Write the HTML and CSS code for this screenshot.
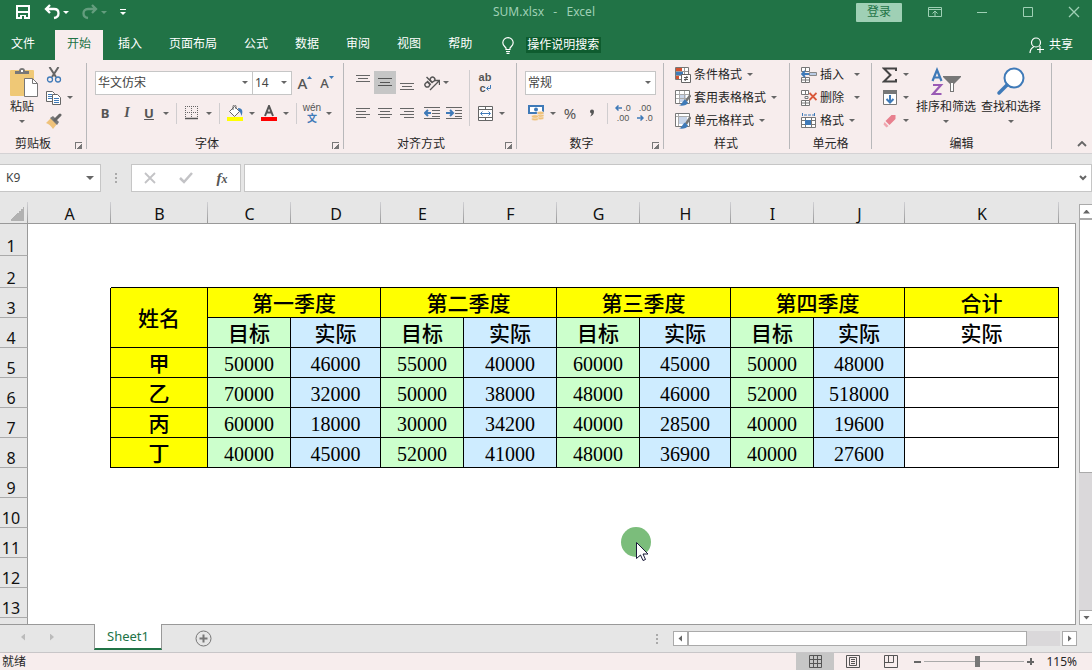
FILE: index.html
```html
<!DOCTYPE html>
<html lang="zh-CN">
<head>
    <meta charset="utf-8">
    <title>SUM.xlsx - Excel</title>
    <link rel="stylesheet" href="styles.css">
</head>
<body>
    <header class="titlebar">
        <div class="quick">
            <button class="q-save" aria-label="保存"><svg width="16" height="16" viewBox="0 0 16 16"><path d="M2 2h12v12H2z M2 8h12" fill="none" stroke="#fff" stroke-width="2"/><path d="M5 11h6v4H5z" fill="#fff"/><path d="M7 12h2v3H7z" fill="#217346"/></svg></button>
            <button aria-label="撤消"><svg width="16" height="16" viewBox="0 0 16 16"><path d="M6 1L2 5l4 4M2.500 5H10c6 0 6 8 0 9" fill="none" stroke="#fff" stroke-width="2.300"/></svg><i class="caret light"></i></button>
            <button class="dim" aria-label="恢复"><svg width="16" height="16" viewBox="0 0 16 16"><path d="M10 1l4 4-4 4M13.500 5H6c-6 0-6 8 0 9" fill="none" stroke="#fff" stroke-width="2.300"/></svg><i class="caret light"></i></button>
            <button aria-label="自定义快速访问工具栏"><svg width="6" height="8" viewBox="0 0 6 8"><path d="M0 1.500h6" stroke="#fff"/><path d="M0 4h6L3 7z" fill="#fff"/></svg></button>
        </div>
        <div class="doc-title">SUM.xlsx&nbsp;&nbsp; -&nbsp;&nbsp; Excel</div>
        <div class="window-buttons">
            <button class="login">登录</button>
            <button aria-label="功能区显示选项"><svg width="14" height="12" viewBox="0 0 14 12"><path d="M.5 1.500h13v9H.5zM.5 3.500h13M7 10V5M4.500 7.500L7 5l2.500 2.500" fill="none" stroke="#9fd0b5"/></svg></button>
            <button aria-label="最小化"><svg width="12" height="12" viewBox="0 0 12 12"><path d="M1 6.500h10" stroke="#9fd0b5"/></svg></button>
            <button aria-label="最大化"><svg width="12" height="12" viewBox="0 0 12 12"><path d="M1.500 1.500h9v9h-9z" fill="none" stroke="#9fd0b5"/></svg></button>
            <button aria-label="关闭"><svg width="12" height="12" viewBox="0 0 12 12"><path d="M1 1l10 10M11 1L1 11" stroke="#9fd0b5" stroke-width="1.300"/></svg></button>
        </div>
    </header>

    <nav class="tabs">
        <a href="#" class="file">文件</a>
        <a href="#" class="active">开始</a>
        <a href="#">插入</a>
        <a href="#">页面布局</a>
        <a href="#">公式</a>
        <a href="#">数据</a>
        <a href="#">审阅</a>
        <a href="#">视图</a>
        <a href="#">帮助</a>
        <a href="#" class="tell-me"><svg width="12" height="17" viewBox="0 0 12 17"><path d="M4 12.500V11C3 9.500 .8 8.500 .8 5.800a5.200 5.200 0 0 1 10.400 0C11.200 8.500 9 9.500 8 11v1.500zM4 14.500h4M4.500 16.300h3" fill="none" stroke="#fff" stroke-width="1.200"/></svg><span>操作说明搜索</span></a>
        <a href="#" class="share"><svg width="16" height="17" viewBox="0 0 16 17"><circle cx="7" cy="5.500" r="4.500" fill="none" stroke="#fff" stroke-width="1.200"/><path d="M1 16c0-3 1.500-5 4-6.500M11 9v7M8 12.500h7" fill="none" stroke="#fff" stroke-width="1.200"/></svg>共享</a>
    </nav>

    <div class="ribbon">
        <section class="group clipboard">
            <div class="group-body split">
                <button class="big"><svg width="30" height="31" viewBox="0 0 30 31"><rect x="1" y="3" width="24" height="26" rx="1" fill="#efc876"/><path d="M6 7V4h4a3 3 0 0 1 6 0h4v3z" fill="#777"/><rect x="12" y="3" width="2" height="2" fill="#fff"/><path d="M15.500 11.500h8l5 5v13h-13z" fill="#fff" stroke="#777"/><path d="M23.500 11.500v5h5" fill="none" stroke="#777"/></svg><span>粘贴</span><i class="caret"></i></button>
                <div class="stack">
                    <button aria-label="剪切"><svg width="16" height="16" viewBox="0 0 16 16"><path d="M3.500 0l6.500 10M12.500 0L6 10" stroke="#666" stroke-width="2"/><circle cx="4" cy="12.500" r="2.500" fill="none" stroke="#3f7ab8" stroke-width="1.300"/><circle cx="12" cy="12.500" r="2.500" fill="none" stroke="#3f7ab8" stroke-width="1.300"/></svg></button>
                    <button aria-label="复制"><svg width="16" height="16" viewBox="0 0 16 16"><path d="M.5 1.500h6l2 2v8h-8z" fill="#fff" stroke="#666"/><path d="M2 4.500h4M2 6.500h4M2 8.500h4" stroke="#3f7ab8"/><path d="M6.500 4.500h5l3 3v7h-8z" fill="#fff" stroke="#666"/><path d="M8 8.500h5M8 10.500h5M8 12.500h5" stroke="#3f7ab8"/></svg><i class="caret"></i></button>
                    <button aria-label="格式刷"><svg width="16" height="16" viewBox="0 0 16 16"><path d="M5 5l6 6-4 5c-2-3-4-5-7-6z" fill="#efc27a"/><path d="M4 5l3-2 6 6-2 3z" fill="#777"/><path d="M9 7l5-5" stroke="#666" stroke-width="3" stroke-linecap="round"/></svg></button>
                </div>
            </div>
            <div class="group-name">剪贴板</div><button class="launcher" aria-label="剪贴板设置"></button>
        </section>

        <section class="group font">
            <div class="group-body">
                <div class="row">
                    <select class="font-name" aria-label="字体"><option>华文仿宋</option></select>
                    <select class="font-size" aria-label="字号"><option>14</option></select>
                    <button class="tool grow" aria-label="增大字号">A<svg width="5" height="3" viewBox="0 0 5 3"><path d="M0 3l2.500-3L5 3z" fill="#3f7ab8"/></svg></button>
                    <button class="tool shrink" aria-label="减小字号">A<svg width="5" height="3" viewBox="0 0 5 3"><path d="M0 0l2.500 3L5 0z" fill="#3f7ab8"/></svg></button>
                </div>
                <div class="row second">
                    <button class="tool bold">B</button>
                    <button class="tool italic">I</button>
                    <button class="tool underline">U</button>
                    <button class="drop" aria-label="下划线样式"><i class="caret"></i></button>
                    <i class="sep"></i>
                    <button class="tool" aria-label="边框"><svg width="14" height="14" viewBox="0 0 14 14"><path d="M0 .5h14M0 6.500h14M.5 0v13M6.500 0v13M12.500 0v13" stroke="#666" stroke-dasharray="1 1"/><path d="M0 12.500h13" stroke="#555" stroke-width="1.500"/></svg></button>
                    <button class="drop" aria-label="边框样式"><i class="caret"></i></button>
                    <i class="sep"></i>
                    <button class="tool" aria-label="填充颜色"><svg width="16" height="16" viewBox="0 0 16 16"><path d="M7.500 1.500l5 5-5 5-5-5z" fill="#fff" stroke="#666"/><path d="M6 5V1.500a1.500 1.500 0 0 1 3 0V4" fill="none" stroke="#666"/><path d="M11 3c5 0 5 4 3.500 8-1-3-1-4-3-5z" fill="#3f7ab8"/><path d="M0 12h16v4H0z" fill="#ff0"/></svg></button>
                    <button class="drop" aria-label="选择填充颜色"><i class="caret"></i></button>
                    <button class="tool" aria-label="字体颜色"><svg width="16" height="16" viewBox="0 0 16 16"><path d="M4 11L8 1l4 10M5.500 7.500h5" fill="none" stroke="#555" stroke-width="2"/><path d="M0 12h16v4H0z" fill="red"/></svg></button>
                    <button class="drop" aria-label="选择字体颜色"><i class="caret"></i></button>
                    <i class="sep"></i>
                    <button class="tool pinyin"><span>wén</span><b>文</b></button>
                    <button class="drop" aria-label="拼音选项"><i class="caret"></i></button>
                </div>
            </div>
            <div class="group-name">字体</div><button class="launcher" aria-label="字体设置"></button>
        </section>

        <section class="group align">
            <div class="group-body split">
                <div>
                    <div class="row">
                        <button class="tool" aria-label="顶端对齐"><svg width="14" height="16" viewBox="0 0 14 16"><path d="M0 .5h14M2 3.500h10M0 6.500h14" stroke="#666"/></svg></button>
                        <button class="tool pressed" aria-label="垂直居中"><svg width="14" height="13" viewBox="0 0 14 13"><path d="M0 2.500h14M2 6.500h10M0 9.500h14" stroke="#555"/></svg></button>
                        <button class="tool" aria-label="底端对齐"><svg width="14" height="16" viewBox="0 0 14 16"><path d="M0 8.500h14M2 11.500h10M0 14.500h14" stroke="#666"/></svg></button>
                        <button class="tool gap" aria-label="方向"><svg width="16" height="16" viewBox="0 0 16 16"><g fill="none" stroke="#555" stroke-width="1.400" transform="rotate(-45 5 8)"><circle cx="2.500" cy="8" r="2.300"/><path d="M5 5.300v5.200M7.500 2v8.500"/><circle cx="10" cy="8" r="2.300"/></g><path d="M6 15l9-9M11 5.500h4.500V10" fill="none" stroke="#555" stroke-width="1.300"/></svg></button>
                        <button class="drop tight" aria-label="方向选项"><i class="caret"></i></button>
                    </div>
                    <div class="row second">
                        <button class="tool" aria-label="左对齐"><svg width="14" height="12" viewBox="0 0 14 12"><path d="M0 1.500h14M0 4.500h10M0 7.500h14M0 10.500h10" stroke="#666"/></svg></button>
                        <button class="tool" aria-label="居中"><svg width="14" height="12" viewBox="0 0 14 12"><path d="M0 1.500h14M2 4.500h10M0 7.500h14M2 10.500h10" stroke="#666"/></svg></button>
                        <button class="tool" aria-label="右对齐"><svg width="14" height="12" viewBox="0 0 14 12"><path d="M0 1.500h14M4 4.500h10M0 7.500h14M4 10.500h10" stroke="#666"/></svg></button>
                        <button class="tool gap" aria-label="减少缩进量"><svg width="16" height="14" viewBox="0 0 16 14"><path d="M0 1.500h16M8 4.500h8M8 7.500h8M8 10.500h8M0 12.500h16" stroke="#666"/><path d="M7 7H2M4 4L1 7l3 3" fill="none" stroke="#3f7ab8" stroke-width="2"/></svg></button>
                        <button class="tool" aria-label="增加缩进量"><svg width="16" height="14" viewBox="0 0 16 14"><path d="M0 1.500h16M9 4.500h7M9 7.500h7M9 10.500h7M0 12.500h16" stroke="#666"/><path d="M0 7h6M4 4l3 3-3 3" fill="none" stroke="#3f7ab8" stroke-width="2"/></svg></button>
                    </div>
                </div>
                <i class="sep tall"></i>
                <div>
                    <div class="row">
                        <button class="tool wrap"><span>ab</span><span>c<svg width="5" height="6" viewBox="0 0 5 6"><path d="M4.500 0v3.500H1M2.500 1.500l-2 2 2 2" fill="none" stroke="#3f7ab8"/></svg></span></button>
                    </div>
                    <div class="row second">
                        <button class="tool" aria-label="合并后居中"><svg width="15" height="15" viewBox="0 0 15 15"><path d="M.5.5h14v14H.5z" fill="#fff" stroke="#666"/><path d="M.5 3.500h14M.5 11.500h14M7.500 0v3M7.500 12v3" stroke="#666"/><path d="M3 7.500h9M4.500 5.500l-2 2 2 2M10.500 5.500l2 2-2 2" fill="none" stroke="#3f7ab8"/></svg></button>
                        <button class="drop" aria-label="合并选项"><i class="caret"></i></button>
                    </div>
                </div>
            </div>
            <div class="group-name">对齐方式</div><button class="launcher" aria-label="对齐设置"></button>
        </section>

        <section class="group number">
            <div class="group-body">
                <div class="row">
                    <select class="number-format" aria-label="数字格式"><option>常规</option></select>
                </div>
                <div class="row second">
                    <button class="tool" aria-label="会计数字格式"><svg width="17" height="16" viewBox="0 0 17 16"><path d="M1 1h14v7H1z" fill="#fff" stroke="#3f7ab8" stroke-width="2"/><circle cx="8" cy="4.500" r="2" fill="#3f7ab8"/><g fill="#efc27a" stroke="#f7eded" stroke-width=".6"><ellipse cx="12.500" cy="13" rx="3.500" ry="1.800"/><ellipse cx="12.500" cy="10.500" rx="3.500" ry="1.800"/><ellipse cx="12.500" cy="8" rx="3.500" ry="1.800"/><ellipse cx="7" cy="14" rx="3.500" ry="1.800"/><ellipse cx="7" cy="11.500" rx="3.500" ry="1.800"/></g></svg></button>
                    <button class="drop" aria-label="会计格式选项"><i class="caret"></i></button>
                    <button class="tool percent">%</button>
                    <button class="tool comma" aria-label="千位分隔样式"><svg width="6" height="8" viewBox="0 0 6 8"><path d="M1 2.500a2 2 0 1 1 4 0C5 5 3.500 7 1 7.500 2 6.500 2.500 5.500 2.500 4.500A2 2 0 0 1 1 2.500z" fill="#555"/></svg></button>
                    <i class="sep"></i>
                    <button class="tool decimals"><span><svg width="7" height="6" viewBox="0 0 7 6"><path d="M1 3h6M3.500.5L1 3l2.500 2.500" fill="none" stroke="#3f7ab8" stroke-width="1.500"/></svg>.0</span><span>.00</span></button>
                    <button class="tool decimals"><span>.00</span><span><svg width="7" height="6" viewBox="0 0 7 6"><path d="M0 3h6M3.500.5L6 3 3.500 5.500" fill="none" stroke="#3f7ab8" stroke-width="1.500"/></svg>.0</span></button>
                </div>
            </div>
            <div class="group-name">数字</div><button class="launcher" aria-label="数字设置"></button>
        </section>

        <section class="group style">
            <div class="group-body stack">
                <button><svg width="16" height="16" viewBox="0 0 16 16"><path d="M.5.5h13v12H.5z" fill="#fff" stroke="#777"/><path d="M1 4.500h12M1 8.500h12M9.500 1v7" stroke="#999"/><path d="M1 1h6v3H1zM1 9h3v3H1z" fill="#d35230"/><path d="M1 5h7v3H1z" fill="#3f7ab8"/><path d="M6.500 7.500h9v8h-9z" fill="#fff" stroke="#666"/><path d="M9 10.500h4M9 12.500h4M12 9l-2 5" stroke="#555"/></svg>条件格式<i class="caret"></i></button>
                <button><svg width="16" height="16" viewBox="0 0 16 16"><path d="M.5.500h14v13H.5z" fill="#fff" stroke="#777"/><path d="M4 4h7v8H4z" fill="#c8d5e9"/><path d="M1 4.500h13M1 8.500h13M4.500 1v12M9.500 1v12" stroke="#aaa"/><path d="M15.500 5l-4.500 6" stroke="#777" stroke-width="2.500"/><path d="M10 9.500l3 3c-1 3-5 3.500-9 3 3-1 3-4 6-6z" fill="#3f7ab8"/></svg>套用表格格式<i class="caret"></i></button>
                <button><svg width="16" height="16" viewBox="0 0 16 16"><path d="M.5.500h14v13H.5z" fill="#fff" stroke="#777"/><path d="M4 4h8v7H4z" fill="#c8d5e9"/><path d="M1 3.500h13M3.500 1v12" stroke="#aaa"/><path d="M15.500 4l-4.500 7" stroke="#777" stroke-width="2.500"/><path d="M10 9.500l3 3c-1 3-5 3.500-9 3 3-1 3-4 6-6z" fill="#3f7ab8"/></svg>单元格样式<i class="caret"></i></button>
            </div>
            <div class="group-name">样式</div>
        </section>

        <section class="group cells">
            <div class="group-body stack">
                <button class="wide"><svg width="16" height="16" viewBox="0 0 16 16"><path d="M.5.5h8v4h-8zM4.500.5v4M.5 10.500h8v5h-8zM4.500 10.500v5M.5 13h8" fill="#fff" stroke="#777"/><path d="M8.500 5.500h7v3h-7z" fill="#b9cbe4" stroke="#888"/><path d="M8 7H2M4 4L1 7l3 3" fill="none" stroke="#3f7ab8" stroke-width="1.800"/></svg>插入<i class="caret"></i></button>
                <button class="wide"><svg width="16" height="16" viewBox="0 0 16 16"><path d="M.5.5h7v4h-7zM4.500.5v4M.5 10.500h8v5h-8zM4.500 10.500v5M.5 13h8M4 6.500h3v2H4z" fill="#fff" stroke="#777"/><path d="M8.500 3l7 7M15.500 3l-7 7" stroke="#d9593b" stroke-width="1.800"/></svg>删除<i class="caret"></i></button>
                <button><svg width="16" height="16" viewBox="0 0 16 16"><path d="M.5 4.500h14v10H.5zM.5 7.500h14M.5 11.500h14M4.500 4.500v10M10.500 4.500v10" fill="#fff" stroke="#777"/><path d="M4 7h6v5H4z" fill="#3f7ab8"/><path d="M1.500 0v4M13.500 0v4M3 2h10" stroke="#3f7ab8" stroke-dasharray="3 1"/></svg>格式<i class="caret"></i></button>
            </div>
            <div class="group-name">单元格</div>
        </section>

        <section class="group edit">
            <div class="group-body split">
                <div class="stack">
                    <button aria-label="自动求和"><svg width="16" height="16" viewBox="0 0 16 16"><path d="M14 4V1.500H2L8.500 8 2 14.500h12V12" fill="none" stroke="#444" stroke-width="2"/></svg><i class="caret"></i></button>
                    <button aria-label="填充"><svg width="16" height="16" viewBox="0 0 16 16"><path d="M1.500 1.500h13v13h-13z" fill="#fff" stroke="#777"/><path d="M1 0h14v4H1z" fill="#777"/><path d="M8 5v7M4.500 9L8 12.500 11.500 9" fill="none" stroke="#3f7ab8" stroke-width="2"/></svg><i class="caret"></i></button>
                    <button aria-label="清除"><svg width="16" height="16" viewBox="0 0 16 16"><path d="M9.500 2h4v4l-6 6-4-4z" fill="#e8808e"/><path d="M2.500 9l4 4-2 1.500-3-3z" fill="#f0a5ae"/></svg><i class="caret"></i></button>
                </div>
                <button class="big"><svg width="30" height="31" viewBox="0 0 30 31"><path d="M1.500 14L6 3l4.500 11M3 10.500h6" fill="none" stroke="#3f7ab8" stroke-width="2.200"/><path d="M2 18h8L2 27h8.500" fill="none" stroke="#9a5bb5" stroke-width="2.200"/><path d="M12 9h18v1l-7 7v8h-4v-8l-7-7z" fill="#777"/><path d="M20 16h2v8h-2z" fill="#fff"/></svg><span>排序和筛选</span><i class="caret"></i></button>
                <button class="big"><svg width="30" height="31" viewBox="0 0 30 31"><circle cx="18" cy="11" r="9.500" fill="#fff" stroke="#3f7ab8" stroke-width="2"/><path d="M11 18L3 26" stroke="#3f7ab8" stroke-width="3.500" stroke-linecap="round"/></svg><span>查找和选择</span><i class="caret"></i></button>
            </div>
            <div class="group-name">编辑</div>
        </section>
        <button class="collapse" aria-label="折叠功能区"><svg width="10" height="6" viewBox="0 0 10 6"><path d="M1 5l4-4 4 4" fill="none" stroke="#666" stroke-width="1.800"/></svg></button>
    </div>

    <div class="formula-bar">
        <select class="name-box" aria-label="名称框"><option>K9</option></select>
        <i class="dots"></i>
        <div class="formula-tools">
            <button aria-label="取消"><svg width="12" height="12" viewBox="0 0 12 12"><path d="M1 1l10 10M11 1L1 11" stroke="#c3c3c6" stroke-width="1.800"/></svg></button>
            <button aria-label="输入"><svg width="14" height="12" viewBox="0 0 14 12"><path d="M1 6l4 4 8-9" fill="none" stroke="#c3c3c6" stroke-width="2.500"/></svg></button>
            <button class="fx">f<span>x</span></button>
        </div>
        <div class="formula-field">
            <input type="text" aria-label="编辑栏">
            <button aria-label="展开编辑栏"><svg width="8" height="6" viewBox="0 0 8 6"><path d="M1 1l3 3 3-3" fill="none" stroke="#666" stroke-width="2"/></svg></button>
        </div>
    </div>

    <main class="workspace">
        <div class="sheet">
            <table>
                <colgroup>
                    <col class="c-head"><col class="c-s"><col class="c-b"><col class="c-s"><col class="c-d"><col class="c-s"><col class="c-f"><col class="c-s"><col class="c-h"><col class="c-s"><col class="c-h"><col class="c-k"><col>
                </colgroup>
                <thead>
                    <tr><th class="corner"></th><th>A</th><th>B</th><th>C</th><th>D</th><th>E</th><th>F</th><th>G</th><th>H</th><th>I</th><th>J</th><th>K</th><th class="rest"></th></tr>
                </thead>
                <tbody>
                    <tr class="tall"><th>1</th><td colspan="12" class="end"></td></tr>
                    <tr class="tall"><th>2</th><td></td><td colspan="10" class="above"></td><td class="end"></td></tr>
                    <tr><th>3</th><td class="before"></td><td class="cell title" rowspan="2">姓名</td><td class="cell title" colspan="2">第一季度</td><td class="cell title" colspan="2">第二季度</td><td class="cell title" colspan="2">第三季度</td><td class="cell title" colspan="2">第四季度</td><td class="cell title">合计</td><td class="end"></td></tr>
                    <tr><th>4</th><td class="before"></td><td class="cell goal sub">目标</td><td class="cell real sub">实际</td><td class="cell goal sub">目标</td><td class="cell real sub">实际</td><td class="cell goal sub">目标</td><td class="cell real sub">实际</td><td class="cell goal sub">目标</td><td class="cell real sub">实际</td><td class="cell sub">实际</td><td class="end"></td></tr>
                    <tr><th>5</th><td class="before"></td><td class="cell title">甲</td><td class="cell goal">50000</td><td class="cell real">46000</td><td class="cell goal">55000</td><td class="cell real">40000</td><td class="cell goal">60000</td><td class="cell real">45000</td><td class="cell goal">50000</td><td class="cell real">48000</td><td class="cell"></td><td class="end"></td></tr>
                    <tr><th>6</th><td class="before"></td><td class="cell title">乙</td><td class="cell goal">70000</td><td class="cell real">32000</td><td class="cell goal">50000</td><td class="cell real">38000</td><td class="cell goal">48000</td><td class="cell real">46000</td><td class="cell goal">52000</td><td class="cell real">518000</td><td class="cell"></td><td class="end"></td></tr>
                    <tr><th>7</th><td class="before"></td><td class="cell title">丙</td><td class="cell goal">60000</td><td class="cell real">18000</td><td class="cell goal">30000</td><td class="cell real">34200</td><td class="cell goal">40000</td><td class="cell real">28500</td><td class="cell goal">40000</td><td class="cell real">19600</td><td class="cell"></td><td class="end"></td></tr>
                    <tr><th>8</th><td class="before"></td><td class="cell title">丁</td><td class="cell goal">40000</td><td class="cell real">45000</td><td class="cell goal">52000</td><td class="cell real">41000</td><td class="cell goal">48000</td><td class="cell real">36900</td><td class="cell goal">40000</td><td class="cell real">27600</td><td class="cell"></td><td class="end"></td></tr>
                    <tr><th>9</th><td colspan="12" class="end"></td></tr>
                    <tr><th>10</th><td colspan="12" class="end"></td></tr>
                    <tr><th>11</th><td colspan="12" class="end"></td></tr>
                    <tr><th>12</th><td colspan="12" class="end"></td></tr>
                    <tr><th>13</th><td colspan="12" class="end"></td></tr>
                    <tr><th></th><td colspan="12" class="end"></td></tr>
                </tbody>
            </table>
            <svg class="pointer" width="30" height="36" viewBox="0 0 30 36"><circle cx="15" cy="15" r="15" fill="#7bbd7b"/><path d="M15.500 15.500v16l4-3.500 2.500 5.500 2.500-1-2.500-5.500h5z" fill="#fff" stroke="#1a1a3a"/></svg>
        </div>
        <div class="vscroll">
            <button aria-label="向上滚动"><i class="tri up"></i></button>
            <div class="vtrack"><div class="vthumb"></div></div>
            <button aria-label="向下滚动"><i class="tri down"></i></button>
        </div>
    </main>

    <div class="sheet-bar">
        <div class="sheet-nav">
            <button aria-label="上一个工作表"><i class="tri left faint"></i></button>
            <button aria-label="下一个工作表"><i class="tri right faint"></i></button>
        </div>
        <a href="#" class="sheet-tab">Sheet1</a>
        <button class="add" aria-label="新工作表"><svg width="17" height="17" viewBox="0 0 17 17"><circle cx="8.500" cy="8.500" r="7.500" fill="none" stroke="#777"/><path d="M8.500 4.500v8M4.500 8.500h8" stroke="#777" stroke-width="2"/></svg></button>
        <i class="dots"></i>
        <div class="hscroll">
            <button aria-label="向左滚动"><i class="tri left"></i></button>
            <div class="htrack"><div class="hthumb"></div></div>
            <button aria-label="向右滚动"><i class="tri right"></i></button>
        </div>
    </div>

    <footer class="status">
        <span class="ready">就绪</span>
        <button class="view on" aria-label="普通"><svg width="13" height="13" viewBox="0 0 13 13"><path d="M.5.5h12v12H.5zM4.500 0v13M8.500 0v13M0 4.500h13M0 8.500h13" fill="none" stroke="#555"/></svg></button>
        <button class="view" aria-label="页面布局视图"><svg width="14" height="13" viewBox="0 0 14 13"><path d="M.5.5h13v12H.5zM3.500 2.500h7v8h-7zM5 4.500h4M5 6.500h4M5 8.500h4" fill="none" stroke="#555"/></svg></button>
        <button class="view" aria-label="分页预览"><svg width="14" height="13" viewBox="0 0 14 13"><path d="M.5.5h13v12H.5zM4.500 0v7M9.500 0v7.500H.5" fill="none" stroke="#555"/></svg></button>
        <button class="zoom-step minus" aria-label="缩小"></button>
        <input class="zoom" type="range" min="0" max="100" value="53" aria-label="缩放">
        <button class="zoom-step plus" aria-label="放大"></button>
        <span class="zoom-value">115%</span>
    </footer>
</body>
</html>
```
FILE: styles.css
```css
* {
    box-sizing: border-box;
}

body {
    margin: 0;
    height: 100vh;
    display: flex;
    flex-direction: column;
    overflow: hidden;
    background: #e6e6e6;
    color: #262626;
    font: 12px/16px "Noto Sans", "Noto Sans CJK SC", sans-serif;
}

button {
    display: flex;
    align-items: center;
    justify-content: center;
    margin: 0;
    padding: 0;
    border: 0;
    background: none;
    color: inherit;
    font: inherit;
    white-space: nowrap;
}

a {
    color: inherit;
    text-decoration: none;
}

svg {
    display: block;
    flex: none;
}

/* title bar */
.titlebar {
    display: grid;
    grid-template-columns: 1fr auto 1fr;
    flex: none;
    height: 30px;
    padding-bottom: 6px;
    align-items: center;
    background: #217346;
}

.quick {
    display: flex;
    align-items: center;
    gap: 13px;
    padding-left: 15px;
}

.quick button {
    gap: 3px;
}

.quick .dim {
    opacity: 0.3;
}

.doc-title {
    padding-right: 4px;
    color: #9fd0b5;
}

.window-buttons {
    display: flex;
    align-items: center;
    justify-content: flex-end;
    gap: 34px;
    padding-right: 12px;
}

.login {
    width: 46px;
    height: 19px;
    margin-right: -8px;
    border-radius: 1px;
    background: #9fd0b5;
    color: #217346;
}

/* ribbon tabs */
.tabs {
    display: flex;
    flex: none;
    gap: 3px;
    height: 30px;
    background: #217346;
    color: #fff;
    line-height: 28px;
}

.tabs a {
    padding: 0 12px;
}

.tabs .file {
    margin-right: 5px;
    padding-left: 11px;
}

.tabs .active {
    background: #f7eded;
    color: #217346;
}

.tabs .tell-me {
    display: flex;
    align-items: center;
    gap: 12px;
    padding-left: 15px;
}

.tell-me span {
    padding: 0 2px 0 1px;
    background: #0e5c2f;
    line-height: 16px;
}

.tabs .share {
    display: flex;
    align-items: center;
    gap: 4px;
    margin-left: auto;
    padding-right: 19px;
}

/* ribbon */
.ribbon {
    display: flex;
    flex: none;
    height: 94px;
    padding: 3px 0 4px;
    border-bottom: 1px solid #d4d2d4;
    background: #f7eded;
}

.group {
    position: relative;
    display: flex;
    flex: none;
    flex-direction: column;
    padding: 0 7px;
    border-right: 1px solid #b8b8ba;
}

.group-body {
    flex: 1;
    min-height: 0;
}

.split {
    display: flex;
}

.row {
    display: flex;
    align-items: center;
    height: 23px;
    margin-top: 8px;
}

.second {
    height: 24px;
    margin-top: 7px;
}

.group-name {
    line-height: 10px;
    text-align: center;
}

.clipboard .group-name,
.font .group-name,
.align .group-name,
.number .group-name {
    padding-right: 18px;
}

.launcher {
    position: absolute;
    right: 4px;
    bottom: 0;
    width: 7px;
    height: 7px;
    border-top: 1px solid #777;
    border-left: 1px solid #777;
    background: linear-gradient(135deg, transparent 55%, #777 55%);
}

.tool {
    width: 22px;
    height: 23px;
    color: #555;
}

.drop {
    width: 12px;
    height: 23px;
}

.pressed {
    background: #c6c6c6;
}

.sep {
    width: 1px;
    height: 21px;
    margin: 0 4px;
    background: #d0cdcf;
}

.sep.tall {
    height: 56px;
    margin-top: 7px;
}

.caret {
    flex: none;
    border: 3px solid transparent;
    border-top-color: #666;
    border-bottom: 0;
}

.caret.light {
    border-top-color: #fff;
}

.stack button {
    height: 23px;
    gap: 3px;
}

.stack .caret {
    margin-left: 2px;
}

.stack .wide .caret {
    margin-left: 7px;
}

.big {
    flex-direction: column;
    height: 65px;
    padding-top: 4px;
    justify-content: flex-start;
}

.big span {
    margin-top: 1px;
}

.big .caret {
    margin-top: 5px;
}

select {
    height: 24px;
    margin: 0;
    padding: 0 2px;
    border: 1px solid #c6c6c6;
    border-radius: 0;
    background: #fff url("data:image/svg+xml,%3Csvg xmlns='http://www.w3.org/2000/svg' width='6' height='3'%3E%3Cpath d='M0 0h6L3 3z' fill='%23666'/%3E%3C/svg%3E") no-repeat right 4px center;
    color: #444;
    font: inherit;
    appearance: none;
}

.clipboard {
    width: 87px;
    padding-left: 5px;
}

.clipboard .big {
    width: 34px;
    margin-right: 7px;
}

.clipboard .big svg {
    margin-left: 4px;
}

.font-name {
    width: 158px;
    margin-left: 1px;
}

.font-size {
    width: 40px;
    margin-left: -1px;
}

.grow,
.shrink {
    align-items: flex-start;
    font-size: 15px;
    font-weight: 500;
    line-height: 24px;
}

.grow {
    margin-left: 2px;
}

.shrink {
    font-size: 13px;
}

.grow svg,
.shrink svg {
    margin-top: 5px;
}

.font {
    padding-right: 5px;
}

.bold {
    font-weight: bold;
    font-size: 13px;
}

.italic {
    font: italic bold 14px "Liberation Serif", serif;
}

.underline {
    font-weight: bold;
    font-size: 13px;
    text-decoration: underline;
}

.pinyin,
.wrap,
.decimals {
    flex-direction: column;
    font-family: "Liberation Sans", "Noto Sans CJK SC", sans-serif;
    font-size: 10px;
    line-height: 11px;
}

.pinyin b {
    color: #3f7ab8;
}

.wrap {
    font-size: 11px;
    font-weight: bold;
}

.wrap span,
.decimals span {
    display: flex;
    align-items: center;
}

.decimals {
    font-size: 9px;
    line-height: 10px;
}

.decimals span {
    gap: 1px;
}

.align {
    padding: 0 8px;
}

.gap {
    margin-left: 3px;
}

.tight {
    margin-left: -3px;
}

.number {
    padding-left: 8px;
}

.number-format {
    width: 131px;
}

.percent {
    font-size: 15px;
}

.style,
.cells {
    padding-left: 11px;
}

.style {
    padding-right: 12px;
}

.cells {
    padding-right: 11px;
}

.edit {
    padding: 0 10px;
}

.edit .big {
    margin-left: 5px;
}

.edit .stack {
    margin-right: 2px;
}

.collapse {
    align-self: flex-end;
    margin-left: auto;
    padding: 0 5px 2px;
}

/* formula bar */
.formula-bar {
    display: flex;
    flex: none;
    align-items: center;
    height: 48px;
}

.name-box {
    width: 102px;
    height: 28px;
    margin-left: -1px;
    padding-left: 6px;
    background-position: right 6px center;
    background-size: 8px 4px;
}

.dots {
    width: 2px;
    height: 10px;
    background: repeating-linear-gradient(#aaa 0 2px, transparent 2px 4px);
}

.formula-bar .dots {
    margin: 0 14px;
}

.formula-tools {
    display: flex;
    width: 110px;
    height: 28px;
    border: 1px solid #c6c6c6;
    background: #fff;
}

.formula-tools button {
    flex: 1;
}

.fx {
    color: #555;
    font: italic bold 15px "Liberation Serif", serif;
}

.fx span {
    padding-top: 3px;
    font-size: 12px;
}

.formula-field {
    display: flex;
    flex: 1;
    height: 28px;
    margin-left: 3px;
    border: 1px solid #c6c6c6;
    background: #fff;
}

.formula-field input {
    flex: 1;
    border: 0;
    outline: 0;
    font: inherit;
}

.formula-field button {
    width: 16px;
}

/* grid */
.workspace {
    display: flex;
    flex: 1;
    min-height: 0;
}

.sheet {
    position: relative;
    flex: 1;
    overflow: hidden;
    border-bottom: 1px solid #999;
}

table {
    width: 100%;
    table-layout: fixed;
    border-spacing: 0;
}

.c-head { width: 28px; }
.c-s { width: 83px; }
.c-b { width: 97px; }
.c-d { width: 90px; }
.c-f { width: 93px; }
.c-h { width: 91px; }
.c-k { width: 154px; }

th,
td {
    height: 30px;
    padding: 0;
}

th {
    background: #e6e6e6;
    color: #111;
    font-size: 16px;
    font-weight: normal;
    line-height: 18px;
}

thead th {
    height: 22px;
    padding-top: 3px;
    border-bottom: 1px solid #999;
    background: linear-gradient(#d0d0d4, #999) no-repeat right / 1px 100%;
}

thead .corner {
    background: linear-gradient(135deg, transparent 50%, #b1b1b1 50%) no-repeat 10px 5px / 14px 14px, linear-gradient(#d0d0d4, #999) no-repeat right / 1px 100%;
}

thead .rest {
    background: none;
}

tbody th {
    padding-right: 5px;
    border-right: 1px solid #999;
    border-bottom: 1px solid #aaa;
    vertical-align: bottom;
}

tbody td {
    background: #fff;
}

.tall th,
.tall td {
    height: 32px;
}

.end {
    border-right: 1px solid #999;
}

.above {
    border-bottom: 1px solid #000;
}

.before {
    border-right: 1px solid #000;
}

.cell {
    padding-top: 2px;
    border-right: 1px solid #000;
    border-bottom: 1px solid #000;
    color: #000;
    font: 20px/24px "Liberation Serif", "Noto Sans CJK SC", serif;
    text-align: center;
}

.title,
.sub {
    font-size: 21px;
    font-weight: 500;
}

.title {
    background: #ff0;
}

.goal {
    background: #cfc;
}

.real {
    background: #ceecff;
}

.pointer {
    position: absolute;
    left: 621px;
    top: 325px;
}

/* scroll bars */
.vscroll {
    display: flex;
    flex: none;
    flex-direction: column;
    width: 16px;
    padding: 2px 0 0 3px;
}

.vscroll button,
.hscroll button {
    flex: none;
    width: 15px;
    height: 15px;
    border: 1px solid #aaa;
    background: #fff;
}

.vtrack {
    flex: 1;
    width: 15px;
    background: #dad8da;
}

.vthumb {
    height: 65%;
    border: 1px solid #aaa;
    background: #fff;
}

.tri {
    width: 7px;
    height: 7px;
    background: #666;
}

.up {
    height: 4px;
    clip-path: polygon(50% 0, 100% 100%, 0 100%);
}

.down {
    height: 4px;
    clip-path: polygon(0 0, 100% 0, 50% 100%);
}

.left {
    width: 4px;
    clip-path: polygon(100% 0, 100% 100%, 0 50%);
}

.right {
    width: 4px;
    clip-path: polygon(0 0, 100% 50%, 0 100%);
}

.faint {
    background: #bbb;
}

.sheet-bar {
    display: flex;
    flex: none;
    align-items: center;
    height: 28px;
    border-bottom: 1px solid #c8c6c8;
}

.sheet-nav {
    display: flex;
    gap: 25px;
    padding: 0 40px 3px 21px;
}

.sheet-tab {
    position: relative;
    align-self: flex-start;
    height: 26px;
    margin-top: -1px;
    padding: 0 12px;
    border: solid #999;
    border-width: 0 1px;
    border-bottom: 2px solid #217346;
    background: #fff;
    color: #217346;
    font-size: 13px;
    line-height: 24px;
}

.add {
    margin-left: 33px;
}

.sheet-bar .dots {
    margin-left: auto;
}

.hscroll {
    display: flex;
    width: 37%;
    margin: 0 15px;
}

.htrack {
    flex: 1;
    margin-right: 2px;
    background: #dad8da;
}

.hthumb {
    width: 91%;
    height: 15px;
    border: 1px solid #aaa;
    background: #fff;
}

/* status bar */
.status {
    display: flex;
    flex: none;
    align-items: center;
    height: 17px;
    background: #f7eded;
}

.ready {
    margin-right: auto;
    padding-left: 2px;
}

.view {
    width: 38px;
    height: 17px;
}

.on {
    background: #c6c6c6;
}

.zoom-step {
    width: 7px;
    height: 7px;
    background: linear-gradient(#666, #666) no-repeat center / 7px 2px;
}

.plus {
    background: linear-gradient(#666, #666) no-repeat center / 7px 2px, linear-gradient(#666, #666) no-repeat center / 2px 7px;
}

.minus {
    margin-left: 4px;
}

.zoom {
    width: 100px;
    height: 11px;
    margin: 0 3px;
    background: linear-gradient(#aaa, #aaa) no-repeat center / 100% 1px;
    appearance: none;
}

.zoom::-webkit-slider-thumb {
    width: 5px;
    height: 11px;
    background: #777;
    appearance: none;
}

.zoom-value {
    padding: 0 15px 0 12px;
}
```
